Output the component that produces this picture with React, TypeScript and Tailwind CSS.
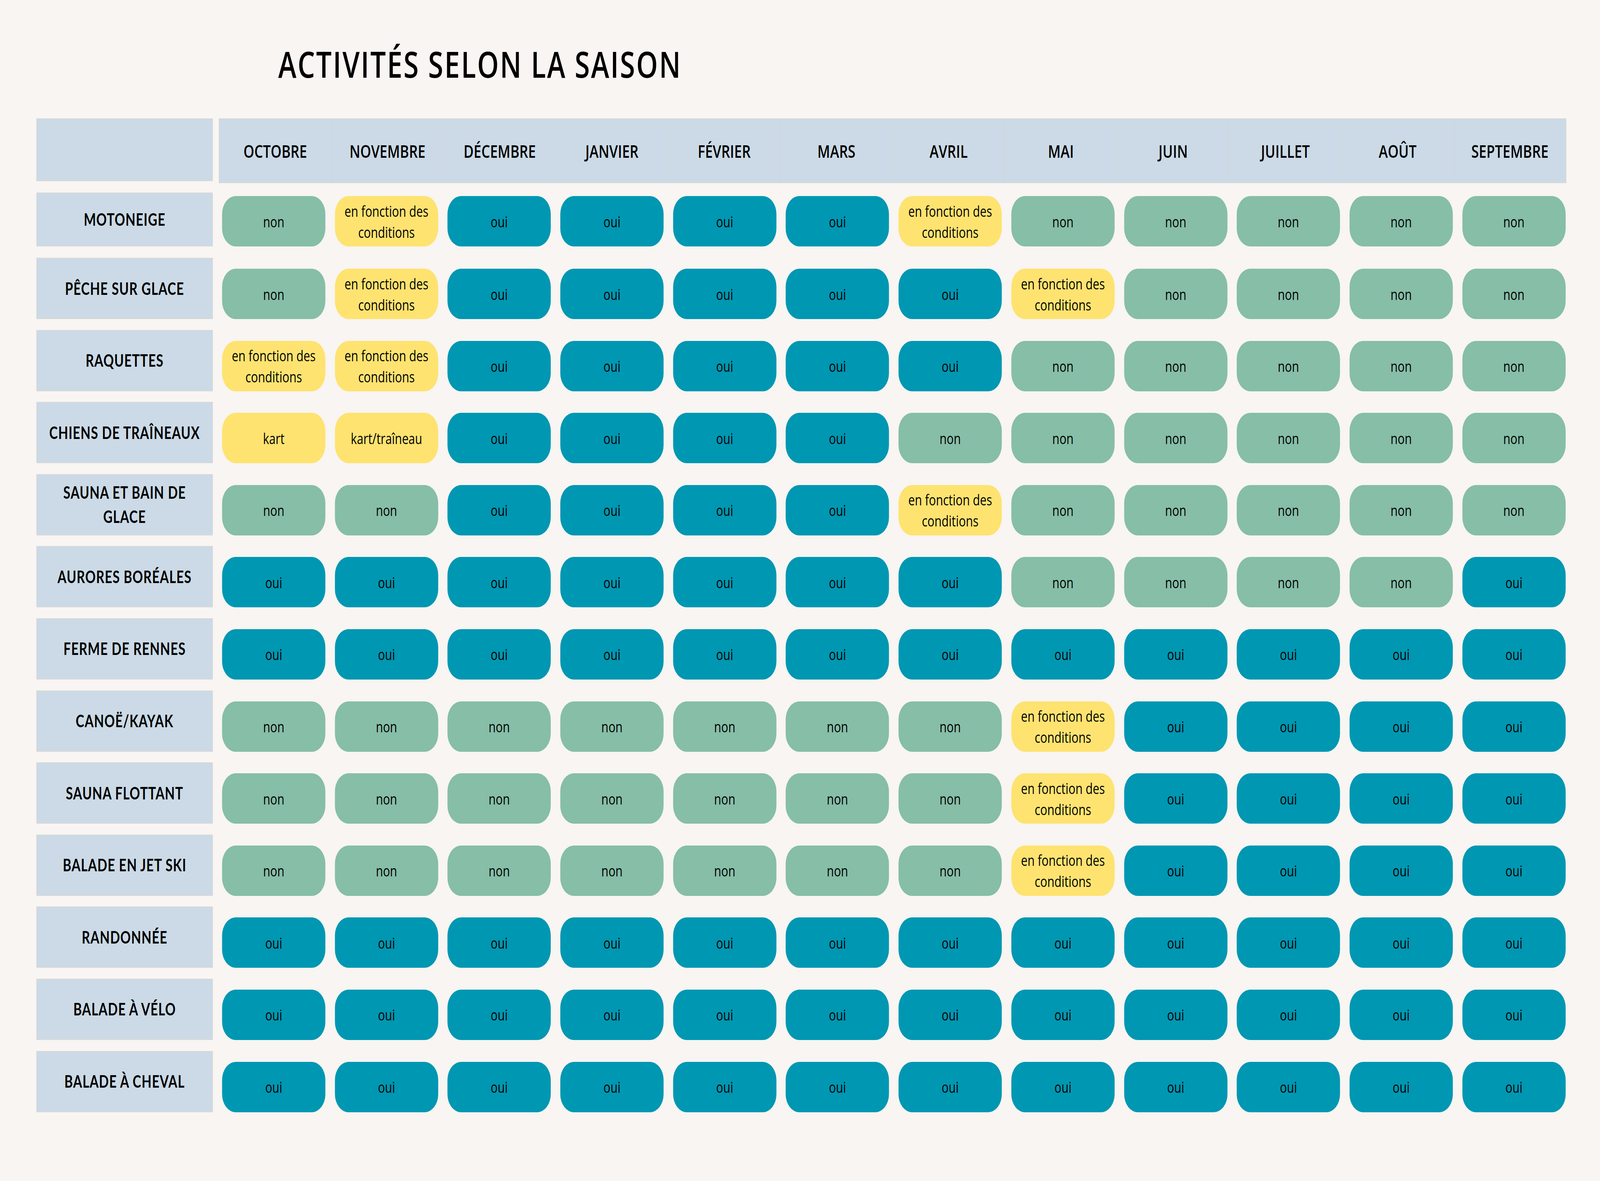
import { useEffect, useState } from 'react';

const MONTHS = [
    'OCTOBRE', 'NOVEMBRE', 'DÉCEMBRE', 'JANVIER', 'FÉVRIER', 'MARS',
    'AVRIL', 'MAI', 'JUIN', 'JUILLET', 'AOÛT', 'SEPTEMBRE',
];

type Cell = 'oui' | 'non' | 'efd' | string;

const ROWS: { label: string; cells: Cell[] }[] = [
    { label: 'MOTONEIGE', cells: ['non', 'efd', 'oui', 'oui', 'oui', 'oui', 'efd', 'non', 'non', 'non', 'non', 'non'] },
    { label: 'PÊCHE SUR GLACE', cells: ['non', 'efd', 'oui', 'oui', 'oui', 'oui', 'oui', 'efd', 'non', 'non', 'non', 'non'] },
    { label: 'RAQUETTES', cells: ['efd', 'efd', 'oui', 'oui', 'oui', 'oui', 'oui', 'non', 'non', 'non', 'non', 'non'] },
    { label: 'CHIENS DE TRAÎNEAUX', cells: ['kart', 'kart/traîneau', 'oui', 'oui', 'oui', 'oui', 'non', 'non', 'non', 'non', 'non', 'non'] },
    { label: 'SAUNA ET BAIN DE\nGLACE', cells: ['non', 'non', 'oui', 'oui', 'oui', 'oui', 'efd', 'non', 'non', 'non', 'non', 'non'] },
    { label: 'AURORES BORÉALES', cells: ['oui', 'oui', 'oui', 'oui', 'oui', 'oui', 'oui', 'non', 'non', 'non', 'non', 'oui'] },
    { label: 'FERME DE RENNES', cells: Array(12).fill('oui') },
    { label: 'CANOË/KAYAK', cells: ['non', 'non', 'non', 'non', 'non', 'non', 'non', 'efd', 'oui', 'oui', 'oui', 'oui'] },
    { label: 'SAUNA FLOTTANT', cells: ['non', 'non', 'non', 'non', 'non', 'non', 'non', 'efd', 'oui', 'oui', 'oui', 'oui'] },
    { label: 'BALADE EN JET SKI', cells: ['non', 'non', 'non', 'non', 'non', 'non', 'non', 'efd', 'oui', 'oui', 'oui', 'oui'] },
    { label: 'RANDONNÉE', cells: Array(12).fill('oui') },
    { label: 'BALADE À VÉLO', cells: Array(12).fill('oui') },
    { label: 'BALADE À CHEVAL', cells: Array(12).fill('oui') },
];

const DESIGN_W = 5360;
const DESIGN_H = 3024;

function Pill ({ value }: { value: Cell }) {
    let color = 'bg-[#fee370]';
    if (value === 'oui') color = 'bg-[#0097b2]';
    if (value === 'non') color = 'bg-[#86bea7]';

    return (
        <div className={`flex h-[129px] w-[346px] items-center justify-center rounded-[46px] px-4 text-center text-[39px] leading-[54px] text-black ${color}`}>
            {value === 'efd' ? (
                <span>en fonction des<br />conditions</span>
            ) : (
                <span>{value}</span>
            )}
        </div>
    );
}

function RowLabel ({ label, first }: { label: string; first?: boolean }) {
    return (
        <div className={`flex w-[591px] shrink-0 items-center justify-center border-2 border-[#dad8d6] bg-[#cbdae6] text-center font-['Lato'] text-[43px] font-bold leading-[62px] tracking-[0.035em] text-black ${first ? 'h-[138px]' : 'h-[157px]'}`}>
            <span className="whitespace-pre-line">{label}</span>
        </div>
    );
}

// the window can be smaller than the 5360x3024 design, so stretch it to fill
function useFitScale () {
    const read = () => ({
        x: window.innerWidth / DESIGN_W,
        y: window.innerHeight / DESIGN_H,
    });
    const [scale, setScale] = useState(read);
    useEffect(() => {
        const onResize = () => setScale(read());
        window.addEventListener('resize', onResize);
        return () => window.removeEventListener('resize', onResize);
    }, []);
    return scale;
}

export default function App () {
    const scale = useFitScale();

    return (
        <div
            className="overflow-hidden bg-[#f8f5f2]"
            style={{ width: DESIGN_W * scale.x, height: DESIGN_H * scale.y }}
        >
            <div
                className="h-[3024px] w-[5360px] origin-top-left bg-[#f8f5f2] pt-[118px] font-['Open_Sans'] text-black"
                style={{ transform: `scale(${scale.x}, ${scale.y})` }}
            >
                <h1 className="ml-[932px] text-[92px] font-semibold leading-none tracking-[4px]">
                    ACTIVITÉS SELON LA SAISON
                </h1>

                <div className="mt-[93px] pl-[122px]">
                    {/* header */}
                    <div className="flex items-start gap-[20px]">
                        <div className="h-[161px] w-[591px] border-2 border-[#dad8d6] bg-[#cbdae6]" />
                        <div className="flex h-[166px] w-[4514px] border-2 border-[#dad8d6] bg-[#cbdae6]">
                            {MONTHS.map((m, i) => (
                                <div
                                    key={m}
                                    className={`flex flex-1 items-center justify-center text-[46px] font-semibold ${i > 0 ? 'border-l-2 border-[#d3d6d9]' : ''}`}
                                >
                                    {m}
                                </div>
                            ))}
                        </div>
                    </div>

                    {/* rows */}
                    <div className="mt-[24px] flex flex-col">
                        {ROWS.map((row, r) => (
                            <div
                                key={row.label}
                                className={`flex items-end gap-[31px] ${r === 1 ? 'mt-[29px]' : r > 1 ? 'mt-[27.6px]' : ''}`}
                            >
                                <RowLabel label={row.label} first={r === 0} />
                                <div className="grid grid-cols-[repeat(12,346px)] gap-x-[31.7px]">
                                    {row.cells.map((c, i) => (
                                        <Pill key={i} value={c} />
                                    ))}
                                </div>
                            </div>
                        ))}
                    </div>
                </div>
            </div>
        </div>
    );
}
